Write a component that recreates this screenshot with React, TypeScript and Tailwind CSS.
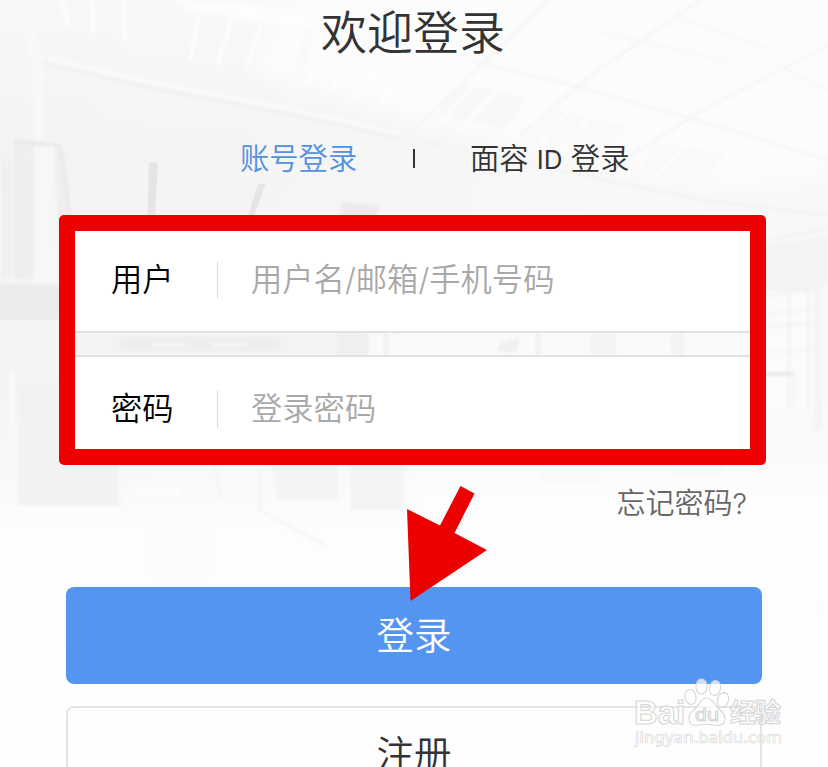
import React from 'react';

const fields = [
  { label: '用户', placeholder: '用户名/邮箱/手机号码', box: 'h-[102px] border-b-2 pb-[3px]' },
  { label: '密码', placeholder: '登录密码', box: 'h-[94px] border-t-2 pt-[11px]' },
];

const beams = [
  [62, 0, 68, 26], [92, 0, 94, 34], [124, 0, 125, 42],
  [199, 14, 190, 60], [232, 20, 217, 64], [260, 26, 245, 70],
  [326, 50, 306, 86], [350, 58, 331, 92], [380, 62, 356, 100], [404, 66, 380, 104],
  [475, 84, 440, 122], [496, 92, 458, 132], [572, 108, 536, 148], [592, 116, 556, 156], [690, 140, 650, 182],
];

function Backdrop() {
  return (
    <svg className="absolute inset-0" width="828" height="767" viewBox="0 0 828 767" aria-hidden="true">
      <defs>
        <linearGradient id="hall" x1="0" y1="0" x2="0" y2="1">
          <stop offset="0" stopColor="#f8f8f8" />
          <stop offset="0.25" stopColor="#f3f3f3" />
          <stop offset="0.6" stopColor="#f4f4f4" />
          <stop offset="0.78" stopColor="#fafafa" />
          <stop offset="0.95" stopColor="#fefefe" />
          <stop offset="1" stopColor="#fefefe" />
        </linearGradient>
        <linearGradient id="glow" x1="0" y1="0" x2="1" y2="0">
          <stop offset="0" stopColor="#fff" stopOpacity="0" />
          <stop offset="0.45" stopColor="#fff" stopOpacity="0.2" />
          <stop offset="0.75" stopColor="#fff" stopOpacity="0.5" />
          <stop offset="1" stopColor="#fff" stopOpacity="0.4" />
        </linearGradient>
        <filter id="soft" x="-10%" y="-10%" width="120%" height="120%">
          <feGaussianBlur stdDeviation="1.6" />
        </filter>
        <filter id="softer" x="-20%" y="-20%" width="140%" height="140%">
          <feGaussianBlur stdDeviation="9" />
        </filter>
      </defs>
      <rect width="828" height="767" fill="#fefefe" />
      <rect width="828" height="640" fill="url(#hall)" />
      <rect width="828" height="640" fill="url(#glow)" />

      {/* roof */}
      <g filter="url(#softer)">
        <path d="M300 -20H860V172L740 190L420 122L250 70Z" fill="#fcfcfc" />
        <path d="M410 480H860V600H410Z" fill="#fdfdfd" />
        <path d="M-20 512H828V640H-20Z" fill="#fdfdfd" />
      </g>
      <g filter="url(#soft)" fill="none">
        <path d="M170 0L250 4L312 14L304 30L190 10Z" fill="#fdfdfd" />
        <path d="M475 62L560 82L690 118L828 160" stroke="#f3f3f3" strokeWidth="2" />
        <path d="M548 0L414 130M700 0L590 76L520 136M828 46L710 106L690 118L600 176" stroke="#f4f4f4" strokeWidth="2.5" />
        <path d="M600 32L730 62M680 18L770 50M770 62L828 90" stroke="#f7f7f7" strokeWidth="2" />
        <path d="M460 82L528 98L505 128L438 116Z" fill="#f8f8f8" />
        <path d="M560 108L630 128L600 158L520 140Z" fill="#f9f9f9" />
        <path d="M650 142L725 154L700 190L640 180Z" fill="#f9f9f9" />
        <path d="M42 63L150 88L290 114L398 138" stroke="#ededed" strokeWidth="2" />
        <path d="M48 58L150 82L290 109L400 134" stroke="#fafafa" strokeWidth="4" />
        <path d="M18 0L38 60V140M290 104L310 30" stroke="#f9f9f9" strokeWidth="10" />
        {beams.map(([x1, y1, x2, y2]) => (
          <path key={`${x1}-${y1}`} d={`M${x1} ${y1}L${x2} ${y2}`} stroke="#fff" strokeWidth="2.5" />
        ))}
        <path d="M414 140L700 200L828 215M770 240L828 228" stroke="#f3f3f3" strokeWidth="3" />
        <path d="M762 246L828 236V285L762 294Z" fill="#f3f3f3" />
      </g>

      {/* pillars */}
      <g filter="url(#soft)" fill="none">
        <path d="M14 141L60 145Q67 190 69 220L70 290H14Z" fill="#efefef" />
        <path d="M34 146H54L60 290H34Z" fill="#f7f7f7" />
        <path d="M14 141L60 146Q68 180 70 235" stroke="#e3e3e3" strokeWidth="2" />
        <path d="M4 160V280M9 160V280M16 160V280M22 160V280" stroke="#ececec" strokeWidth="2" />
        <path d="M0 284H70V322H0Z" fill="#ececec" />
        <path d="M0 281H70M0 322H70" stroke="#f8f8f8" strokeWidth="3" />
        <path d="M18 382H122V506H18Z" fill="#f2f2f2" />
        <path d="M12 370V500M122 460V510" stroke="#f9f9f9" strokeWidth="6" />
        <path d="M342 202L381 206L370 226H338Z" fill="#ebebeb" />
        <path d="M270 460H338V500H278Z" fill="#f4f4f4" />
        <path d="M350 460H404V510H350Z" fill="#f4f4f4" />
        <path d="M214 462L221 500M260 470V510L325 545" stroke="#f5f5f5" strokeWidth="3" />
        <path d="M135 491H180" stroke="#fefefe" strokeWidth="6" />
        <path d="M150 500H210V575H150Z" fill="#fbfbfb" />
        <path d="M764 292H812V412H764Z" fill="#fbfbfb" />
        <path d="M766 296L811 289M766 314L811 310M766 327L811 323M766 351H811M789 292V410M808 290V410" stroke="#eeeeee" strokeWidth="1.5" />
        <path d="M766 374H795" stroke="#e8e8e8" strokeWidth="4" />
        <path d="M794 374V408" stroke="#f2f2f2" strokeWidth="2" />
        <path d="M818 278V430" stroke="#f4f4f4" strokeWidth="7" />
        <path d="M540 466H600V482H540ZM670 466H725V476H670Z" fill="#f9f9f9" />
      </g>
      <path d="M149 162.500H158L155 215H147.500ZM258 184L266 183.500L254 215H248Z" fill="#e5e5e5" />

      {/* seats seen between the two fields */}
      <g filter="url(#soft)">
        <path d="M75 333H340V355H75Z" fill="#f3f3f3" />
        <path d="M120 337H280V351H120Z" fill="#eeeeee" />
        <path d="M153 345H185M213 345H246" stroke="#fafafa" strokeWidth="4" strokeDasharray="4 2" />
        <path d="M338 333H368V355H338Z" fill="#f0f0f0" />
        <path d="M370 335H750V355H370Z" fill="#fafafa" />
        <path d="M386 333V355M538 333V355" fill="none" stroke="#efefef" strokeWidth="4" />
        <path d="M500 343L520 338L516 353L496 351Z" fill="#f0f0f0" />
        <path d="M590 333H616V355H590ZM671 333H684V355H671Z" fill="#f3f3f3" />
      </g>
    </svg>
  );
}

function Arrow() {
  return (
    <svg className="absolute left-[400px] top-[480px]" width="92" height="126" viewBox="400 480 92 126" aria-hidden="true">
      <path d="M460.500 486L474.500 493.500L454.500 533L487 550L410.500 601L407 509L440 525.500Z" fill="#ec0000" />
    </svg>
  );
}

function Watermark() {
  return (
    <svg className="absolute left-[626px] top-[672px]" width="170" height="84" viewBox="626 672 170 84" aria-hidden="true">
      <g fill="#fff" fillOpacity="0.7" stroke="#d6d6d6" strokeWidth="1.1">
        <ellipse cx="690.500" cy="697" rx="5.500" ry="7.500" transform="rotate(-12 690.500 697)" />
        <ellipse cx="701.500" cy="686.500" rx="5.500" ry="7.500" />
        <ellipse cx="715" cy="688" rx="5.500" ry="7.500" transform="rotate(12 715 688)" />
        <ellipse cx="723" cy="700" rx="5.500" ry="7.500" transform="rotate(18 723 700)" />
        <path d="M706.500 698C712 698 714 704 718 708C722 712 726 715 725 720C724 725 719 726 714 725C709 724 704 724 699 725C694 726 690 725 689 720C688 714 692 712 696 708C700 704 701 698 706.500 698Z" />
        <g fontFamily="Liberation Sans, Noto Sans CJK SC, sans-serif" fontWeight="700">
          <text x="634" y="724" fontSize="33" textLength="51" lengthAdjust="spacingAndGlyphs">Bai</text>
          <text x="695" y="721" fontSize="19" fontWeight="400" textLength="24" lengthAdjust="spacingAndGlyphs">du</text>
          <text x="730" y="722" fontSize="26" textLength="51">经验</text>
          <text x="635" y="743" fontSize="17" fontFamily="Noto Sans, sans-serif" fontWeight="500" stroke="#dcdcdc" strokeWidth="0.7" textLength="147" lengthAdjust="spacingAndGlyphs">jingyan.baidu.com</text>
        </g>
      </g>
    </svg>
  );
}

export default function App() {
  return (
    <div className="relative h-[767px] w-[828px] overflow-hidden bg-[#fefefe] font-['Inter','Noto_Sans_CJK_SC',sans-serif] font-[350] text-[#333]">
      <Backdrop />

      <main className="relative flex flex-col">
        <h1 className="flex h-[66px] items-center justify-center pr-[2px] pb-[2px] text-[46px] leading-none">欢迎登录</h1>

        <nav className="mt-[72px] flex h-10 items-center pl-[240px] text-[29.300px] leading-none">
          <span className="w-[173px] pt-px text-[#5191e0]">账号登录</span>
          <span className="h-[19px] w-[2px] bg-[#333]" />
          <span className="pt-px pl-[55px] whitespace-nowrap">
            面容 <span className="text-[26px] font-normal">ID</span> 登录
          </span>
        </nav>

        {/* Account form */}
        <form className="mt-[37px] ml-[59px] flex h-[250px] w-[707px] flex-col justify-between rounded-[5px] border-[16px] border-[#ec0000]">
          {fields.map((field) => (
            <label key={field.label} className={`flex items-center border-[#e2e2e2] bg-white pl-9 text-[31.300px] leading-none ${field.box}`}>
              <span className="w-[106px] pt-[3px] text-black">{field.label}</span>
              <span className="h-[38px] w-px bg-[#dcdcdc]" />
              <span className="pt-[3px] pl-[33px] text-[#a8a8a8]">{field.placeholder}</span>
            </label>
          ))}
        </form>

        <a className="mt-[19px] mr-[81px] flex h-10 items-center self-end pb-px text-[29px] leading-none text-[#666]">忘记密码?</a>

        <div className="mt-[63px] ml-[66px] flex w-[696px] flex-col gap-[22px]">
          <button className="h-[97px] rounded-lg bg-[#5595f2] pt-px text-[37.500px] leading-none text-white">登录</button>
          <button className="h-[97px] rounded-lg border-2 border-[#e4e4e4] bg-[#fefefe] pt-px text-[37.500px] leading-none">注册</button>
        </div>
      </main>

      <Arrow />
      <Watermark />
    </div>
  );
}
